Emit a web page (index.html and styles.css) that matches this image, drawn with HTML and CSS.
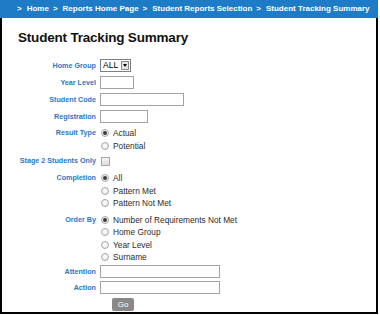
FILE: index.html
```html
<!DOCTYPE html>
<html>
<head>
<meta charset="utf-8">
<link rel="stylesheet" href="styles.css">
</head>
<body>
<div class="page">
  <div class="crumbs">
    <span class="sep">&gt;</span><span class="crumb">Home</span>
    <span class="sep">&gt;</span><span class="crumb">Reports Home Page</span>
    <span class="sep">&gt;</span><span class="crumb">Student Reports Selection</span>
    <span class="sep">&gt;</span><span class="crumb">Student Tracking Summary</span>
  </div>
  <div class="body">
    <h1 class="title">Student Tracking Summary</h1>
    <div class="form">
      <div class="row row-input">
        <span class="lbl">Home Group</span>
        <div class="field"><span class="select"><span class="select-val">ALL</span><span class="select-btn"><span class="arrow"></span></span></span></div>
      </div>
      <div class="row row-input">
        <span class="lbl">Year Level</span>
        <div class="field"><span class="input w34"></span></div>
      </div>
      <div class="row row-input">
        <span class="lbl">Student Code</span>
        <div class="field"><span class="input w84"></span></div>
      </div>
      <div class="row row-input">
        <span class="lbl">Registration</span>
        <div class="field"><span class="input w48"></span></div>
      </div>
      <div class="row row-group g1">
        <span class="lbl">Result Type</span>
        <div class="field">
          <div class="opt"><span class="radio on"></span>Actual</div>
          <div class="opt"><span class="radio"></span>Potential</div>
        </div>
      </div>
      <div class="row row-check">
        <span class="lbl">Stage 2 Students Only</span>
        <div class="field"><span class="check"></span></div>
      </div>
      <div class="row row-group g2">
        <span class="lbl">Completion</span>
        <div class="field">
          <div class="opt"><span class="radio on"></span>All</div>
          <div class="opt"><span class="radio"></span>Pattern Met</div>
          <div class="opt"><span class="radio"></span>Pattern Not Met</div>
        </div>
      </div>
      <div class="row row-group g3">
        <span class="lbl">Order By</span>
        <div class="field">
          <div class="opt"><span class="radio on"></span>Number of Requirements Not Met</div>
          <div class="opt"><span class="radio"></span>Home Group</div>
          <div class="opt"><span class="radio"></span>Year Level</div>
          <div class="opt"><span class="radio"></span>Surname</div>
        </div>
      </div>
      <div class="row row-input row-tight">
        <span class="lbl">Attention</span>
        <div class="field"><span class="input w120"></span></div>
      </div>
      <div class="row row-input">
        <span class="lbl">Action</span>
        <div class="field"><span class="input w120"></span></div>
      </div>
      <div class="row row-btn">
        <span class="lbl"></span>
        <div class="field"><span class="btn">Go</span></div>
      </div>
    </div>
  </div>
</div>
</body>
</html>
```
FILE: styles.css
```css
html, body {
  margin: 0;
  padding: 0;
  background: #fff;
}
body {
  font-family: "Liberation Sans", Arial, sans-serif;
}
.page {
  width: 378px;
  height: 314px;
  display: flex;
  flex-direction: column;
}
.crumbs {
  height: 18px;
  background: #1e7bc5;
  color: #fff;
  font-weight: bold;
  font-size: 8px;
  line-height: 18px;
  padding-left: 17px;
  white-space: nowrap;
  display: flex;
  align-items: center;
}
.sep {
  margin-right: 5px;
}
.crumb {
  margin-right: 4px;
}
.body {
  flex: 1;
  border: 2px solid #000;
  border-top: 0;
}
.title {
  margin: 12px 0 0 16px;
  font-size: 13.5px;
  line-height: 16px;
  letter-spacing: -0.2px;
  font-weight: bold;
  color: #111;
}
.form {
  margin-top: 11px;
  display: flex;
  flex-direction: column;
}
.row {
  display: grid;
  grid-template-columns: 94px 1fr;
  column-gap: 4px;
}
.lbl {
  text-align: right;
  font-weight: bold;
  font-size: 7.2px;
  color: #2a78c2;
  white-space: nowrap;
}
.row-input {
  height: 17px;
  align-items: center;
}
.row-input .lbl {
  line-height: 17px;
}
.row-tight {
  height: 15px;
}
.row-tight .lbl {
  line-height: 15px;
}
.field {
  display: flex;
  flex-direction: column;
  align-items: flex-start;
}
.input {
  display: block;
  height: 13px;
  box-sizing: border-box;
  border: 1px solid #a3a3a3;
  background: #fff;
}
.w34 { width: 34px; }
.w48 { width: 48px; }
.w84 { width: 84px; }
.w120 { width: 120px; }
.select {
  display: flex;
  align-items: stretch;
  height: 13px;
  width: 31px;
  box-sizing: border-box;
  border: 1px solid #7f7f7f;
  background: #fff;
}
.select-val {
  flex: 1;
  font-size: 8.5px;
  line-height: 11px;
  padding-left: 2px;
  color: #000;
}
.select-btn {
  width: 8px;
  margin: 1px;
  box-sizing: border-box;
  border: 1px solid #8a8a8a;
  background: #e6e6e6;
  display: flex;
  align-items: center;
  justify-content: center;
}
.arrow {
  width: 0;
  height: 0;
  border-left: 2.5px solid transparent;
  border-right: 2.5px solid transparent;
  border-top: 3px solid #000;
}
.row-group .lbl {
  line-height: 12.5px;
}
.g1 { padding: 2px 0 1px; }
.g2 { padding: 3px 0 0; }
.g3 { padding: 4px 0 0; }
.opt {
  height: 12.5px;
  display: flex;
  align-items: center;
  font-size: 8.3px;
  color: #2b2b2b;
  white-space: nowrap;
}
.radio {
  width: 8px;
  height: 8px;
  box-sizing: border-box;
  margin-left: 1px;
  margin-right: 4px;
  border-radius: 50%;
  border: 1px solid #a8a8a8;
  background: radial-gradient(circle at 50% 40%, #fff 0%, #e2e2e2 100%);
  display: flex;
  align-items: center;
  justify-content: center;
}
.radio.on::after {
  content: "";
  width: 4px;
  height: 4px;
  border-radius: 50%;
  background: #3a3a3a;
}
.row-check {
  height: 16px;
  align-items: center;
}
.row-check .lbl {
  line-height: 16px;
}
.check {
  display: block;
  width: 9px;
  height: 9px;
  margin-left: 1px;
  box-sizing: border-box;
  border: 1px solid #a8a8a8;
  background: linear-gradient(#f4f4f4, #dcdcdc);
}
.row-btn {
  margin-top: 2px;
}
.btn {
  display: block;
  margin-left: 12px;
  width: 22px;
  height: 13px;
  background: #898989;
  color: #fff;
  font-size: 8px;
  line-height: 13px;
  text-align: center;
  border-radius: 2px;
}
```
